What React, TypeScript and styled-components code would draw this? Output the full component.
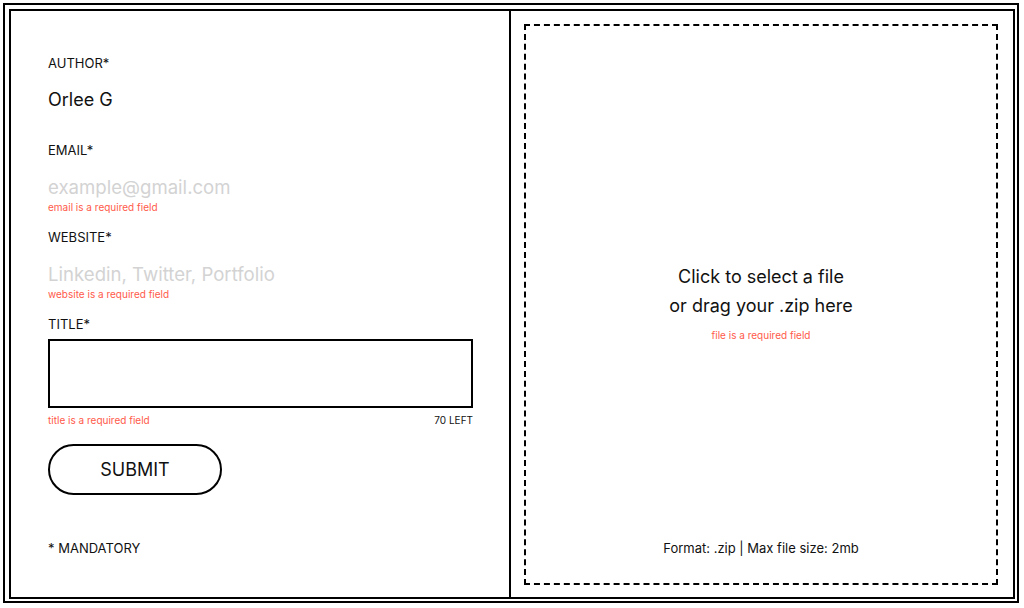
import styled, { createGlobalStyle } from "styled-components";

const GlobalStyle = createGlobalStyle`
  html, body {
    margin: 0;
    padding: 0;
    background: #fff;
  }
  body {
    font-family: Inter, "Liberation Sans", Arial, sans-serif;
    color: #111;
  }
  * {
    box-sizing: border-box;
  }
`;

const ERROR = "#ff5a4a";

const fields = [
  { label: "EMAIL*", placeholder: "example@gmail.com", error: "email is a required field" },
  { label: "WEBSITE*", placeholder: "Linkedin, Twitter, Portfolio", error: "website is a required field" },
];

const App = () => {
  return (
    <>
      <GlobalStyle />
      <Frame>
        <Sheet>
          <FormPanel>
            <Field>
              <Label>AUTHOR*</Label>
              <Value>Orlee G</Value>
              <ErrorText />
            </Field>
            {fields.map((f) => (
              <Field key={f.label}>
                <Label>{f.label}</Label>
                <TextInput placeholder={f.placeholder} />
                <ErrorText>{f.error}</ErrorText>
              </Field>
            ))}
            <TitleLabel>TITLE*</TitleLabel>
            <TitleBox />
            <TitleMeta>
              <ErrorText>title is a required field</ErrorText>
              <Counter>70 LEFT</Counter>
            </TitleMeta>
            <SubmitButton type="button">SUBMIT</SubmitButton>
            <Footnote>* MANDATORY</Footnote>
          </FormPanel>
          <UploadPanel>
            <DropZone>
              <span />
              <DropCenter>
                <DropText>
                  Click to select a file
                  <br />
                  or drag your .zip here
                </DropText>
                <DropError>file is a required field</DropError>
              </DropCenter>
              <DropFooter>Format: .zip | Max file size: 2mb</DropFooter>
            </DropZone>
          </UploadPanel>
        </Sheet>
      </Frame>
    </>
  );
};

export default App;

const Frame = styled.div`
  margin: 3px;
  width: 1016px;
  height: 600px;
  border: 2px solid #000;
  padding: 4px 2px 2px 4px;
`;

const Sheet = styled.div`
  display: flex;
  height: 100%;
  border: 2px solid #000;
`;

const FormPanel = styled.div`
  width: 500px;
  border-right: 2px solid #000;
  padding: 44px 36px 41px 37px;
  display: flex;
  flex-direction: column;
`;

const Field = styled.div`
  display: flex;
  flex-direction: column;
  margin-bottom: 15px;
`;

const Label = styled.div`
  font-size: 13px;
  line-height: 16px;
  height: 16px;
  margin-bottom: 17px;
`;

const TitleLabel = styled(Label)`
  margin-bottom: 7px;
`;

const Value = styled.div`
  font-size: 18px;
  line-height: 24px;
  height: 24px;
  margin-bottom: 1px;
`;

const TextInput = styled.input`
  border: none;
  outline: none;
  padding: 0;
  margin: 0 0 1px;
  height: 24px;
  font-family: inherit;
  font-size: 18.6px;
  line-height: 24px;
  color: #111;
  background: transparent;

  &::placeholder {
    color: #d3d3d3;
  }
`;

const ErrorText = styled.div`
  font-size: 10px;
  line-height: 14px;
  height: 14px;
  color: ${ERROR};
`;

const TitleBox = styled.textarea`
  display: block;
  width: 100%;
  height: 69px;
  border: 2px solid #000;
  border-radius: 0;
  resize: none;
  outline: none;
  font-family: inherit;
  font-size: 16px;
  padding: 8px;
`;

const TitleMeta = styled.div`
  display: flex;
  justify-content: space-between;
  align-items: center;
  margin-top: 5px;
`;

const Counter = styled.div`
  font-size: 10px;
  line-height: 14px;
`;

const SubmitButton = styled.button`
  margin-top: 17px;
  width: 174px;
  height: 51px;
  border: 2px solid #000;
  border-radius: 26px;
  background: #fff;
  font-family: inherit;
  font-size: 18px;
  color: #111;
  padding: 0;
  cursor: pointer;
`;

const Footnote = styled.div`
  margin-top: auto;
  font-size: 13px;
  line-height: 16px;
`;

const UploadPanel = styled.div`
  flex: 1;
  padding: 13px 15px 12px 13px;
`;

const DropZone = styled.div`
  height: 100%;
  border: 2px dashed #000;
  display: grid;
  grid-template-rows: 1fr auto 1fr;
  justify-items: center;
`;

const DropCenter = styled.div`
  display: flex;
  flex-direction: column;
  align-items: center;
  margin-bottom: 6px;
`;

const DropText = styled.div`
  font-size: 18px;
  line-height: 29px;
  text-align: center;
`;

const DropError = styled.div`
  margin-top: 8px;
  font-size: 10px;
  line-height: 14px;
  color: ${ERROR};
`;

const DropFooter = styled.div`
  align-self: end;
  padding-bottom: 27px;
  font-size: 13px;
  line-height: 16px;
`;
